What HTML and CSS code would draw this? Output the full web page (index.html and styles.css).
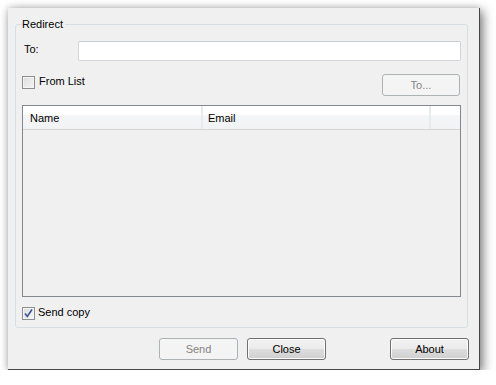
FILE: index.html
```html
<!DOCTYPE html>
<html lang="en">
<head>
  <meta charset="UTF-8" />
  <title>Redirect</title>
  <link rel="stylesheet" href="styles.css">
</head>
<body>

  <div class="window">
    <fieldset class="group">
      <legend>Redirect</legend>

      <div class="row to-row">
        <label class="to-label">To:</label>
        <input class="to-input" type="text" />
      </div>

      <div class="row list-row">
        <span class="check"></span>
        <span class="check-text">From List</span>
        <button class="btn to-btn" disabled>To...</button>
      </div>

      <div class="listview">
        <div class="lv-head">
          <div class="col col-name">Name</div>
          <div class="col col-email">Email</div>
          <div class="col col-rest"></div>
        </div>
      </div>

      <div class="row copy-row">
        <span class="check checked">
          <svg width="11" height="11" viewBox="0 0 11 11"><path d="M2 5.5 L4.3 8.5 L9 1.5" fill="none" stroke="#3b5597" stroke-width="1.6"/></svg>
        </span>
        <span class="check-text copy-text">Send copy</span>
      </div>
    </fieldset>

    <div class="buttons">
      <button class="btn send" disabled>Send</button>
      <button class="btn close">Close</button>
      <button class="btn about">About</button>
    </div>
  </div>

</body>
</html>
```

FILE: styles.css
```css
body { margin: 0; background: #fff; font-family: "Liberation Sans", Arial, sans-serif; font-size: 11px; color: #000; }

.window {
  margin: 8px 0 0 8px; width: 472px; height: 362px; box-sizing: border-box;
  padding: 10px 0 0 7px; background: #f0f0f0;
  border-right: 1px solid #474747; border-bottom: 1px solid #474747;
  box-shadow: 3px 3px 10px rgba(0,0,0,0.5), -1px -1px 6px rgba(0,0,0,0.12);
}

.group {
  margin: 0; padding: 0 6px 7px 6px; width: 453px; box-sizing: border-box;
  border: 1px solid #d5dfe5; border-radius: 3px;
}
.group legend { padding: 0 2px 0 0; line-height: 13px; }

.row { display: flex; align-items: flex-start; }

.to-row { margin-top: 10px; height: 20px; }
.to-label { margin: 2px 0 0 2px; width: 54px; line-height: 13px; }
.to-input {
  flex: 1; height: 20px; box-sizing: border-box; margin: 0; padding: 0 3px;
  border: 1px solid #d2d6db; border-top-color: #c6cbd1; border-radius: 2px; background: #fff;
  font: inherit; outline: none;
}

.list-row { margin-top: 13px; height: 22px; }
.check {
  width: 13px; height: 13px; box-sizing: border-box; margin-top: 2px;
  border: 1px solid #8e8f8f; background: linear-gradient(135deg, #dcdcdc, #f6f6f6);
  box-shadow: inset 0 0 0 1px #f4f4f4; display: flex; align-items: center; justify-content: center;
}
.check.checked { background: linear-gradient(135deg, #dcdcdc, #f8f8f8); margin-top: 0; }
.check-text { margin: 1px 0 0 4px; line-height: 13px; }
.copy-text { margin-left: 3px; margin-top: -1px; }

.btn {
  width: 79px; height: 22px; box-sizing: border-box; margin: 0; padding: 0;
  border: 1px solid #707070; border-radius: 3px;
  background: linear-gradient(#f2f2f2 0%, #ebebeb 50%, #dddddd 51%, #cfcfcf 100%);
  font: inherit; color: #000; box-shadow: inset 0 0 0 1px #fcfcfc;
}
.btn:disabled {
  border-color: #adb2b5; background: #f4f4f4; color: #838383; box-shadow: none;
}
.to-btn { margin-left: auto; margin-right: 1px; width: 78px; }

.listview {
  margin-top: 9px; height: 192px; box-sizing: border-box;
  border: 1px solid #828790; background: #f0f0f0;
}
.lv-head {
  display: flex; height: 24px; box-sizing: border-box;
  background: linear-gradient(#ffffff 0%, #ffffff 40%, #f4f5f7 41%, #f2f3f5 100%);
  border-bottom: 1px solid #d5d5d5;
}
.col { line-height: 24px; padding-left: 7px; box-sizing: border-box; border-right: 2px solid #e6e9ee; }
.col-name { width: 180px; }
.col-email { width: 228px; padding-left: 5px; }
.col-rest { flex: 1; border-right: 0; }

.copy-row { margin-top: 10px; height: 13px; }

.buttons { display: flex; justify-content: flex-end; margin: 10px 10px 0 0; }
.send { margin-right: 9px; }
.close { margin-right: 64px; }
```
